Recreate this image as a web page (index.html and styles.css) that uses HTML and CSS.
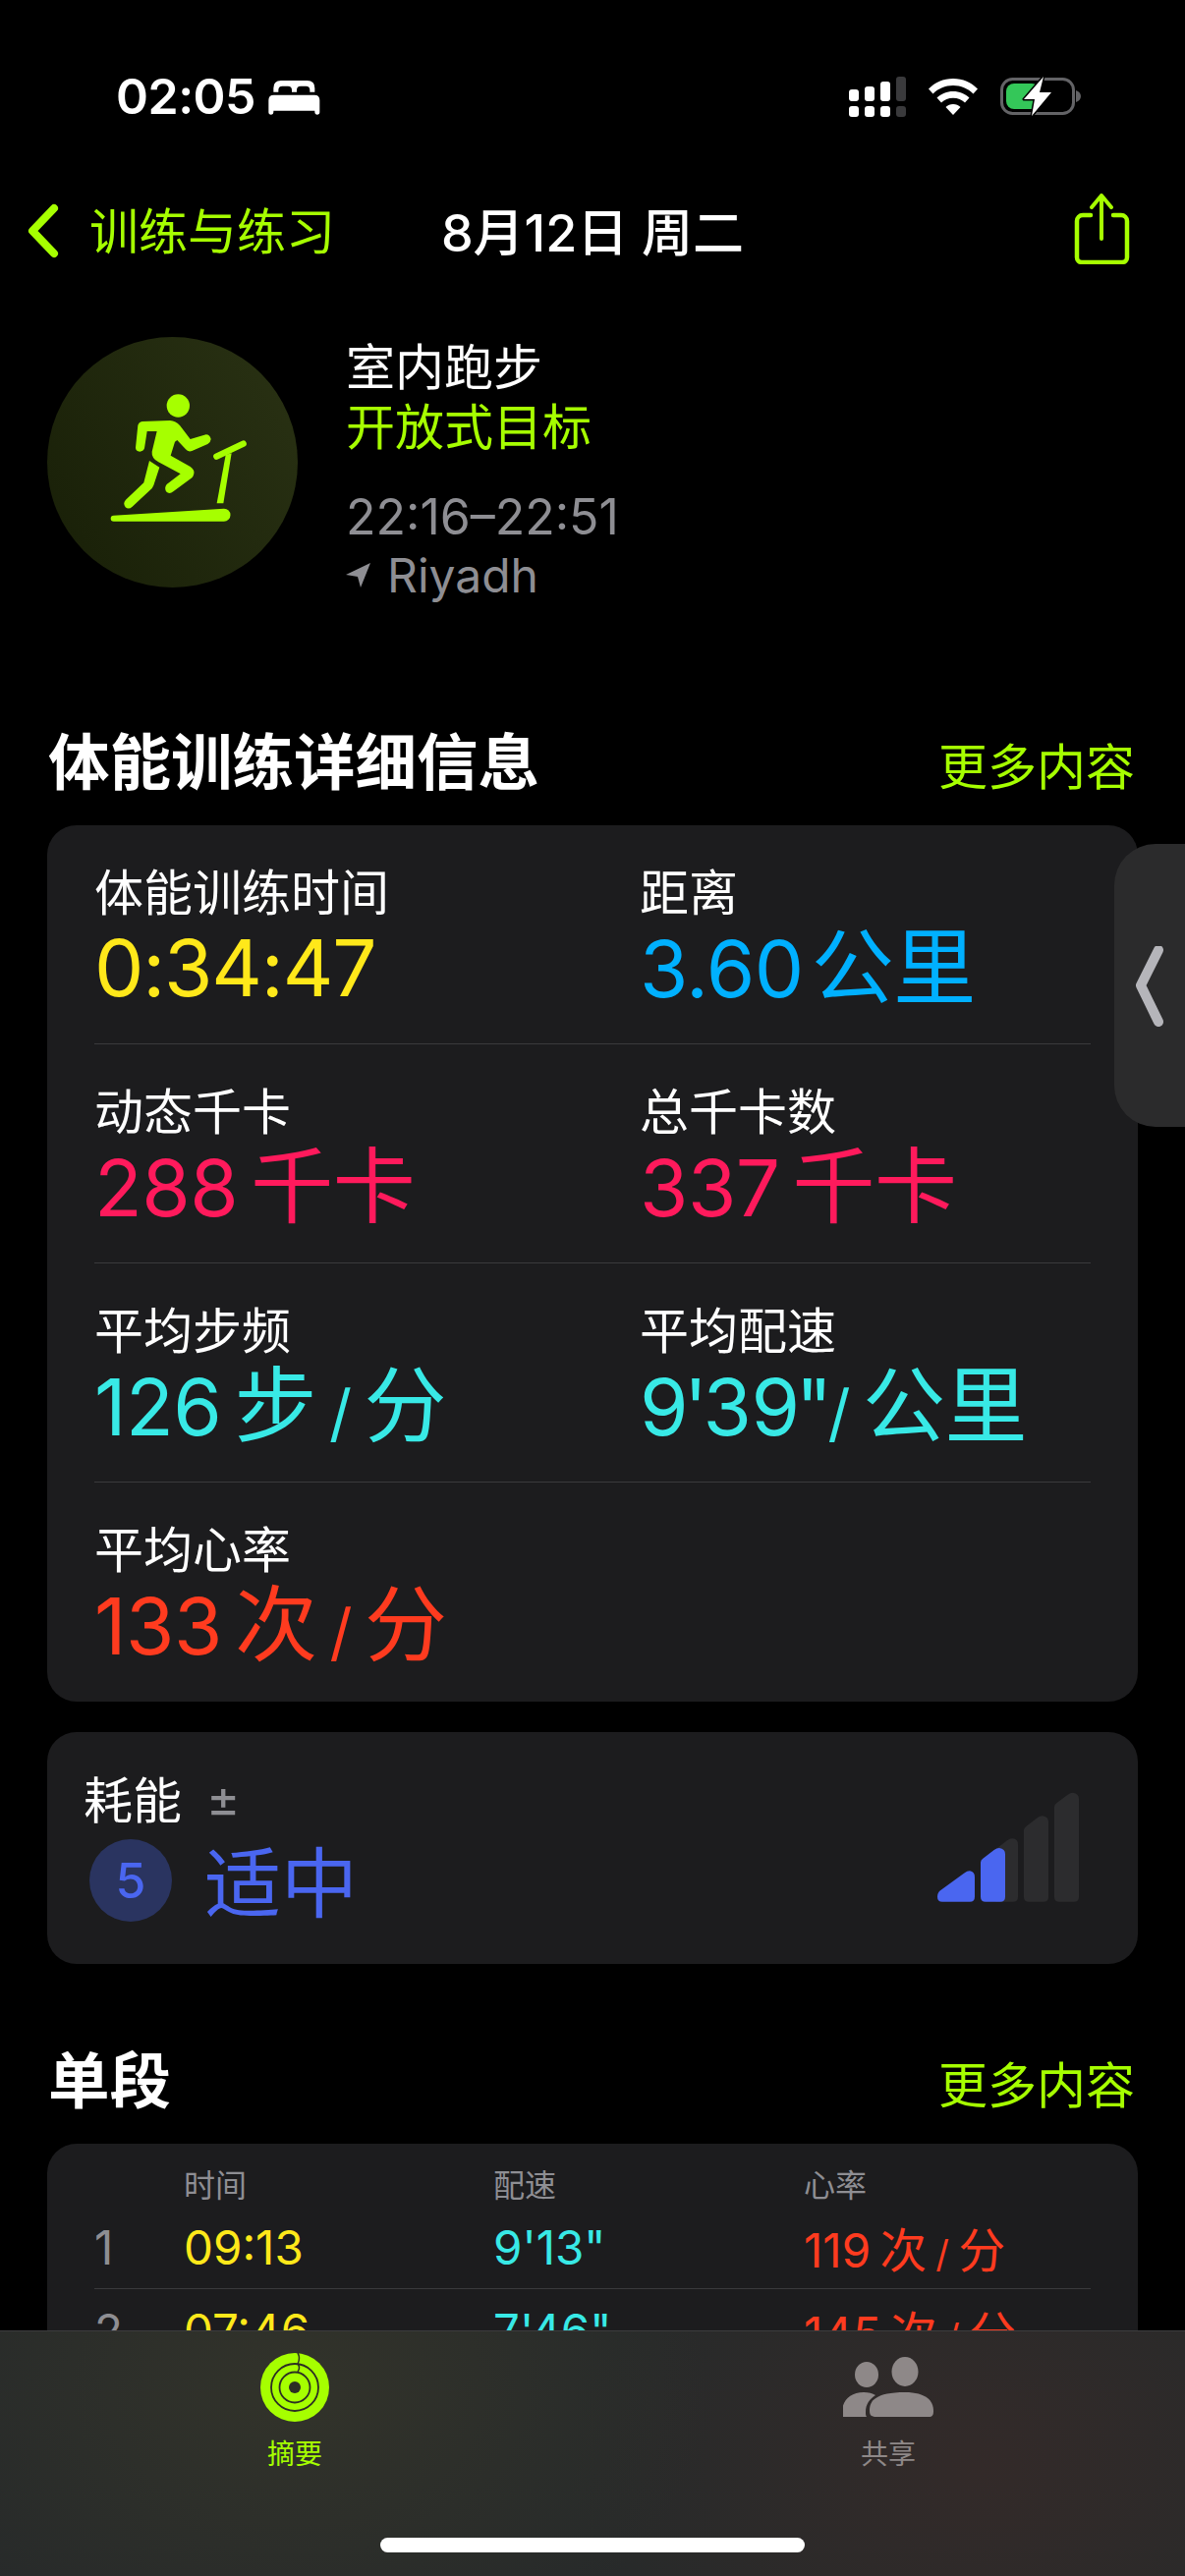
FILE: index.html
```html
<!DOCTYPE html>
<html lang="zh-CN">
<head>
  <meta charset="UTF-8" />
  <title>体能训练详细信息</title>
  <link rel="stylesheet" href="styles.css">
</head>
<body>
  <div id="phone">
    <div class="status">
      <div class="status-left">
        <span class="clock">02:05</span>
        <svg class="bed" width="70" height="55" viewBox="0 0 210 165">
          <path fill="#fff" d="M60 33H140Q163 33 163 56V68H148V62Q148 50 136 50H120Q108 50 108 62V68H93V62Q93 50 81 50H64Q52 50 52 62V68H37V56Q37 33 60 33Z"/>
          <path fill="#fff" d="M38 77H162Q178 77 178 93V130Q178 137 170 137Q163 137 163 130V125H37V130Q37 137 30 137Q22 137 22 130V93Q22 77 38 77Z"/>
        </svg>
      </div>
      <div class="status-right">
        <svg width="58" height="41" viewBox="865 77 58 41">
          <g fill="#fff">
            <rect x="865" y="90" width="10" height="12" rx="3"/>
            <rect x="881" y="87" width="10" height="15" rx="3"/>
            <rect x="897" y="82" width="10" height="20" rx="3"/>
            <rect x="865" y="107" width="10" height="11" rx="3"/>
            <rect x="881" y="107" width="10" height="11" rx="3"/>
            <rect x="897" y="107" width="10" height="11" rx="3"/>
          </g>
          <g fill="#3a3a3c">
            <rect x="913" y="77" width="10" height="25" rx="3"/>
            <rect x="913" y="107" width="10" height="11" rx="3"/>
          </g>
        </svg>
        <svg width="50" height="37" viewBox="946 79 50 37">
          <path fill="#fff" d="M971 79c10 0 18.500 4 25 10.500l-4.500 5c-5.500-5.500-12.500-8.500-20.500-8.500s-15 3-20.500 8.500l-4.500-5C952.500 83 961 79 971 79z"/>
          <path fill="#fff" d="M971 92c6.500 0 12 2.500 16.500 6.500l-4.500 5c-3.200-3-7.200-4.700-12-4.700s-8.800 1.700-12 4.700l-4.500-5C959 94.500 964.500 92 971 92z"/>
          <path fill="#fff" d="M971 105c3 0 5.500 1 7.500 3L971 116l-7.500-8c2-2 4.500-3 7.500-3z"/>
        </svg>
        <svg width="83" height="42" viewBox="1018 76 83 42">
          <rect x="1019.500" y="79.500" width="73" height="35" rx="11" fill="none" stroke="#636366" stroke-width="3"/>
          <path fill="#636366" d="M1095 91c3 1 5 3 5 6s-2 5-5 6z"/>
          <rect x="1024" y="84" width="34" height="26" rx="8" fill="#34c759"/>
          <path fill="#fff" stroke="#000" stroke-width="3" stroke-linejoin="round" paint-order="stroke" d="M1062 77l-20 23h11l-3 17 20-24h-12z"/>
        </svg>
      </div>
    </div>

    <div class="nav">
      <div class="nav-back">
        <svg width="34" height="58" viewBox="26 206 34 58">
          <path d="M55 212L33 235l22 23" fill="none" stroke="#a6ff00" stroke-width="8" stroke-linecap="round" stroke-linejoin="round"/>
        </svg>
        <span>训练与练习</span>
      </div>
      <div class="nav-title">8月12日 周二</div>
      <svg class="nav-share" width="58" height="72" viewBox="1092 197 58 72">
        <path d="M1110 219h-8a6 6 0 0 0-6 6v37a5 5 0 0 0 5 5h41a5 5 0 0 0 5-5v-37a6 6 0 0 0-6-6h-8" fill="none" stroke="#a6ff00" stroke-width="4.500" stroke-linecap="round"/>
        <path d="M1121 243v-44M1111 211l10-12 10 12" fill="none" stroke="#a6ff00" stroke-width="4" stroke-linecap="round" stroke-linejoin="round"/>
      </svg>
    </div>

    <div class="main">
      <div class="summary">
        <div class="activity-badge">
          <svg width="255" height="255" viewBox="55 40 765 765">
            <g fill="#a6ff00">
              <circle cx="455" cy="250" r="35"/>
              <path d="M345 298L430 295Q448 297 460 310L492 352L540 338Q552 338 555 352Q554 362 545 367L497 388Q485 392 478 383L452 355L445 360L432 402L492 436Q506 446 503 458Q501 466 497 470L440 512Q428 522 418 512Q412 500 420 490L462 458L395 422Q373 410 375 390L390 328L360 328L352 380Q348 390 338 390Q325 388 325 378L332 310Q335 300 345 298Z"/>
              <path d="M367 418L398 438L380 493Q376 502 372 505L315 558Q304 568 294 560Q285 548 295 537L350 485Z"/>
              <path d="M600 400L618 395L593 548L573 548Z"/>
              <path d="M258 585L595 564A19.500 19.500 0 0 1 595 603L258 603A9 9 0 0 1 258 585Z"/>
            </g>
            <path d="M572 405L654 366" stroke="#a6ff00" stroke-width="19" stroke-linecap="round"/>
          </svg>
        </div>
        <div class="summary-text">
          <div class="summary-line">室内跑步</div>
          <div class="summary-line green">开放式目标</div>
          <div class="summary-line gray summary-time">22:16–22:51</div>
          <div class="summary-line gray summary-place">
            <svg width="26" height="26" viewBox="0 0 26 26"><path fill="#8e8e93" d="M25 0L15 25l-3-11L0 12z"/></svg>
            <span>Riyadh</span>
          </div>
        </div>
      </div>

      <div class="section-head first">
        <h2>体能训练详细信息</h2>
        <span class="more">更多内容</span>
      </div>
      <div class="card">
        <div class="metric-row">
          <div class="metric">
            <div class="metric-label">体能训练时间</div>
            <div class="metric-value yellow">0:34:47</div>
          </div>
          <div class="metric">
            <div class="metric-label">距离</div>
            <div class="metric-value blue">3.60 <span class="unit">公里</span></div>
          </div>
        </div>
        <div class="metric-row">
          <div class="metric">
            <div class="metric-label">动态千卡</div>
            <div class="metric-value wide pink">288 <span class="unit">千卡</span></div>
          </div>
          <div class="metric">
            <div class="metric-label">总千卡数</div>
            <div class="metric-value wide pink">337 <span class="unit">千卡</span></div>
          </div>
        </div>
        <div class="metric-row">
          <div class="metric">
            <div class="metric-label">平均步频</div>
            <div class="metric-value wide cyan">126 <span class="unit">步</span> <span class="slash">/</span> <span class="unit">分</span></div>
          </div>
          <div class="metric">
            <div class="metric-label">平均配速</div>
            <div class="metric-value wide cyan">9<span class="tick">'</span>39<span class="tick">"</span><span class="slash">/</span> <span class="unit">公里</span></div>
          </div>
        </div>
        <div class="metric-row">
          <div class="metric">
            <div class="metric-label">平均心率</div>
            <div class="metric-value wide red">133 <span class="unit">次</span> <span class="slash">/</span> <span class="unit">分</span></div>
          </div>
        </div>
      </div>

      <div class="card effort">
        <div class="effort-left">
          <div class="effort-label">耗能<span class="plus-minus">±</span></div>
          <div class="effort-value">
            <span class="effort-num">5</span>
            <span class="effort-text">适中</span>
          </div>
        </div>
        <svg class="effort-bars" width="160" height="130" viewBox="0 0 480 390">
          <g fill="#2c2c2e">
            <path d="M213 365H258Q273 365 273 350V190Q273 173 256 172Q248 172 240 178L205 205V365Z"/>
            <path d="M306 365Q291 365 291 350V147Q291 140 298 135L332 109Q340 103 348 103Q366 105 366 122V350Q366 365 351 365Z"/>
            <path d="M399 365Q384 365 384 350V76Q384 69 391 64L425 38Q433 32 441 32Q459 34 459 51V350Q459 365 444 365Z"/>
          </g>
          <g fill="#4a66f0">
            <path d="M42 365Q27 365 27 350Q27 338 36 331L108 278Q118 271 126 271Q141 273 141 290V350Q141 365 126 365Z"/>
            <path d="M174 365Q159 365 159 350V245Q159 238 166 233L200 207Q208 201 216 201Q234 203 234 220V350Q234 365 219 365Z"/>
          </g>
        </svg>
      </div>

      <div class="section-head">
        <h2>单段</h2>
        <span class="more">更多内容</span>
      </div>
      <div class="card splits">
        <div class="split-row split-head">
          <span></span><span>时间</span><span>配速</span><span>心率</span>
        </div>
        <div class="split-row">
          <span class="gray">1</span><span class="yellow">09:13</span><span class="cyan">9'13"</span><span class="red">119 次 <span class="slash">/</span> 分</span>
        </div>
        <div class="split-row">
          <span class="gray">2</span><span class="yellow">07:46</span><span class="cyan">7'46"</span><span class="red">145 次 <span class="slash">/</span> 分</span>
        </div>
      </div>
    </div>

    <div class="tabbar">
      <div class="tabs">
        <div class="tab active">
          <svg width="72" height="72" viewBox="-36 -36 72 72">
            <circle r="35" fill="#a6ff00"/>
            <circle r="24" fill="none" stroke="#2c2e24" stroke-width="1.800"/>
            <circle r="15.500" fill="none" stroke="#2c2e24" stroke-width="1.800"/>
            <circle r="6" fill="#2c2e24"/>
            <path d="M3-35q3 5 0 11q3 4 0 8" fill="none" stroke="#2c2e24" stroke-width="1.500"/>
          </svg>
          <span>摘要</span>
        </div>
        <div class="tab">
          <svg width="93" height="72" viewBox="858 2393 93 72">
            <g fill="#8e8888">
              <ellipse cx="882" cy="2416" rx="12" ry="13"/>
              <ellipse cx="921" cy="2413" rx="13.500" ry="15"/>
              <path d="M892 2459c-6 0-7-2-7-7 0-9 6-18 36-18 22 0 29 9 29 19 0 4-1 6-5 6z"/>
              <path d="M857 2459v-5c0-11 8-20 22-20 5 0 9 1 12 3-6 4-10 9-10 17 0 2 0 4 1 5z"/>
            </g>
          </svg>
          <span>共享</span>
        </div>
      </div>
      <div class="home-bar"></div>
    </div>

    <div class="side-handle">
      <svg width="30" height="84" viewBox="1156 963 30 84">
        <path d="M1179 967l-18 36 18 37" fill="none" stroke="#b5b5ba" stroke-width="10" stroke-linecap="round" stroke-linejoin="round"/>
      </svg>
    </div>
  </div>
</body>
</html>
```

FILE: styles.css
```css
html, body {
  margin: 0;
  padding: 0;
  background-color: #000;
}

body {
  font-family: Inter, "Noto Sans CJK SC", sans-serif;
  color: #fff;
}

#phone {
  position: relative;
  width: 1206px;
  height: 2622px;
  display: flex;
  flex-direction: column;
  overflow: hidden;
  background-color: #000;
}

.green { color: #a6ff00; }
.gray { color: #8e8e93; }
.yellow { color: #ffe81a; }
.blue { color: #00b0ff; }
.pink { color: #ff1a5c; }
.cyan { color: #38e9e6; }
.red { color: #ff3b1f; }

.slash { font-size: 0.8em; }

/* status bar */
.status {
  height: 196px;
  flex: none;
  display: flex;
  justify-content: space-between;
  align-items: center;
  padding: 0 105px 0 118px;
}

.status-left {
  display: flex;
  align-items: center;
  gap: 6px;
}

.clock {
  font-size: 50px;
  font-weight: 600;
  line-height: 60px;
  letter-spacing: -0.5px;
}

.status-right {
  display: flex;
  align-items: center;
  gap: 23px;
}

/* nav */
.nav {
  height: 78px;
  flex: none;
  position: relative;
  display: flex;
  justify-content: space-between;
  align-items: center;
  padding: 0 56px 0 26px;
}

.nav-back {
  display: flex;
  align-items: center;
  gap: 31px;
  font-size: 50px;
  color: #a6ff00;
}

.nav-back span { margin-top: -6px; }

.nav-title {
  font-size: 52px;
  font-weight: 500;
  position: absolute;
  left: 0;
  right: 0;
  top: 0;
  text-align: center;
}

.nav-share { margin-top: -5px; }

.main {
  flex: 1;
  min-height: 0;
  overflow: hidden;
}

/* workout summary */
.summary {
  display: flex;
  align-items: flex-start;
  gap: 49px;
  padding: 69px 0 0 48px;
}

.activity-badge {
  width: 255px;
  height: 255px;
  border-radius: 50%;
  background: linear-gradient(60deg, #181f07, #2a3214);
}

.activity-badge svg { display: block; }

.summary-text { padding-top: 1px; }

.summary-line {
  font-size: 50px;
  line-height: 61px;
}

.summary-time {
  line-height: 60px;
  margin-top: 30px;
}

.summary-place {
  display: flex;
  align-items: center;
  gap: 16px;
  font-size: 48px;
  line-height: 60px;
}

/* section headers */
.section-head {
  display: flex;
  justify-content: space-between;
  align-items: baseline;
  height: 80px;
  line-height: 83px;
  padding: 0 51px 0 49px;
  margin: 78px 0 25px;
}

.section-head.first { margin-top: 119px; }

.section-head h2 {
  margin: 0;
  font-size: 62.500px;
  font-weight: 700;
}

.more {
  font-size: 50px;
  color: #a6ff00;
}

.card {
  margin: 0 48px;
  background-color: #1c1c1e;
  border-radius: 30px;
  padding: 0 48px;
}

/* metrics */
.metric-row {
  height: 223px;
  box-sizing: border-box;
  padding-top: 39px;
  display: grid;
  grid-template-columns: 555px 1fr;
  border-bottom: 1px solid #3a3a3c;
}

.metric-row:last-child { border-bottom: none; }

.metric-label {
  font-size: 50px;
  line-height: 60px;
}

.metric-value {
  font-size: 80px;
  line-height: 90px;
  margin-top: 1px;
  white-space: nowrap;
  letter-spacing: -0.5px;
  word-spacing: -14px;
}

.metric-value.wide { word-spacing: -9px; }
.metric-value.yellow { letter-spacing: -1.200px; }

.unit { font-size: 84px; }
.tick { margin: 0 -4px; }

/* effort */
.effort {
  margin-top: 31px;
  height: 236px;
  box-sizing: border-box;
  padding: 38px 53px 0 37px;
  display: flex;
  justify-content: space-between;
  align-items: flex-start;
}

.effort-label {
  font-size: 50px;
  line-height: 60px;
}

.plus-minus {
  font-size: 52px;
  color: #8e8e93;
  margin-left: 25px;
  vertical-align: 2px;
}

.effort-value {
  display: flex;
  align-items: flex-start;
  gap: 33px;
  margin: 9px 0 0 6px;
  color: #4a66f0;
}

.effort-num {
  width: 84px;
  height: 84px;
  border-radius: 50%;
  background-color: #2a3460;
  font-size: 50px;
  font-weight: 500;
  display: flex;
  align-items: center;
  justify-content: center;
}

.effort-text {
  font-size: 78px;
  line-height: 84px;
  margin-top: 4px;
}

.effort-bars { margin-top: 13px; }

/* splits */
.splits { padding-top: 23px; padding-bottom: 0; }

.split-row {
  display: grid;
  grid-template-columns: 91px 315px 316px 1fr;
  align-items: center;
  height: 84px;
  font-size: 47.500px;
  word-spacing: -4px;
  border-bottom: 1px solid #3a3a3c;
}

.split-row:last-child { border-bottom: none; }

.split-head {
  height: 40px;
  font-size: 32px;
  line-height: 40px;
  color: #8e8e93;
  border-bottom: none;
}

/* tab bar */
.tabbar {
  height: 250px;
  flex: none;
  box-sizing: border-box;
  border-top: 1px solid #3c3c3e;
  background:
    radial-gradient(420px 300px at 300px 60px, #32332a, transparent),
    radial-gradient(420px 300px at 1000px 140px, #332a29, transparent),
    #272a2a;
  display: flex;
  flex-direction: column;
  align-items: center;
}

.tabs {
  width: 100%;
  height: 210px;
  display: grid;
  grid-template-columns: 600px 608px;
  padding-top: 21px;
  box-sizing: border-box;
}

.tab {
  display: flex;
  flex-direction: column;
  align-items: center;
  gap: 12px;
  font-size: 28px;
  line-height: 40px;
  color: #8e8888;
}

.tab svg { display: block; }

.tab.active { color: #a6ff00; }

.home-bar {
  width: 432px;
  height: 15px;
  border-radius: 8px;
  background-color: #fff;
}

/* slide-over handle on the right edge */
.side-handle {
  position: absolute;
  left: 1134px;
  top: 859px;
  width: 72px;
  height: 288px;
  box-sizing: border-box;
  padding: 104px 0 0 22px;
  background-color: #2b2b2c;
  border-radius: 42px 0 0 42px;
}
```
